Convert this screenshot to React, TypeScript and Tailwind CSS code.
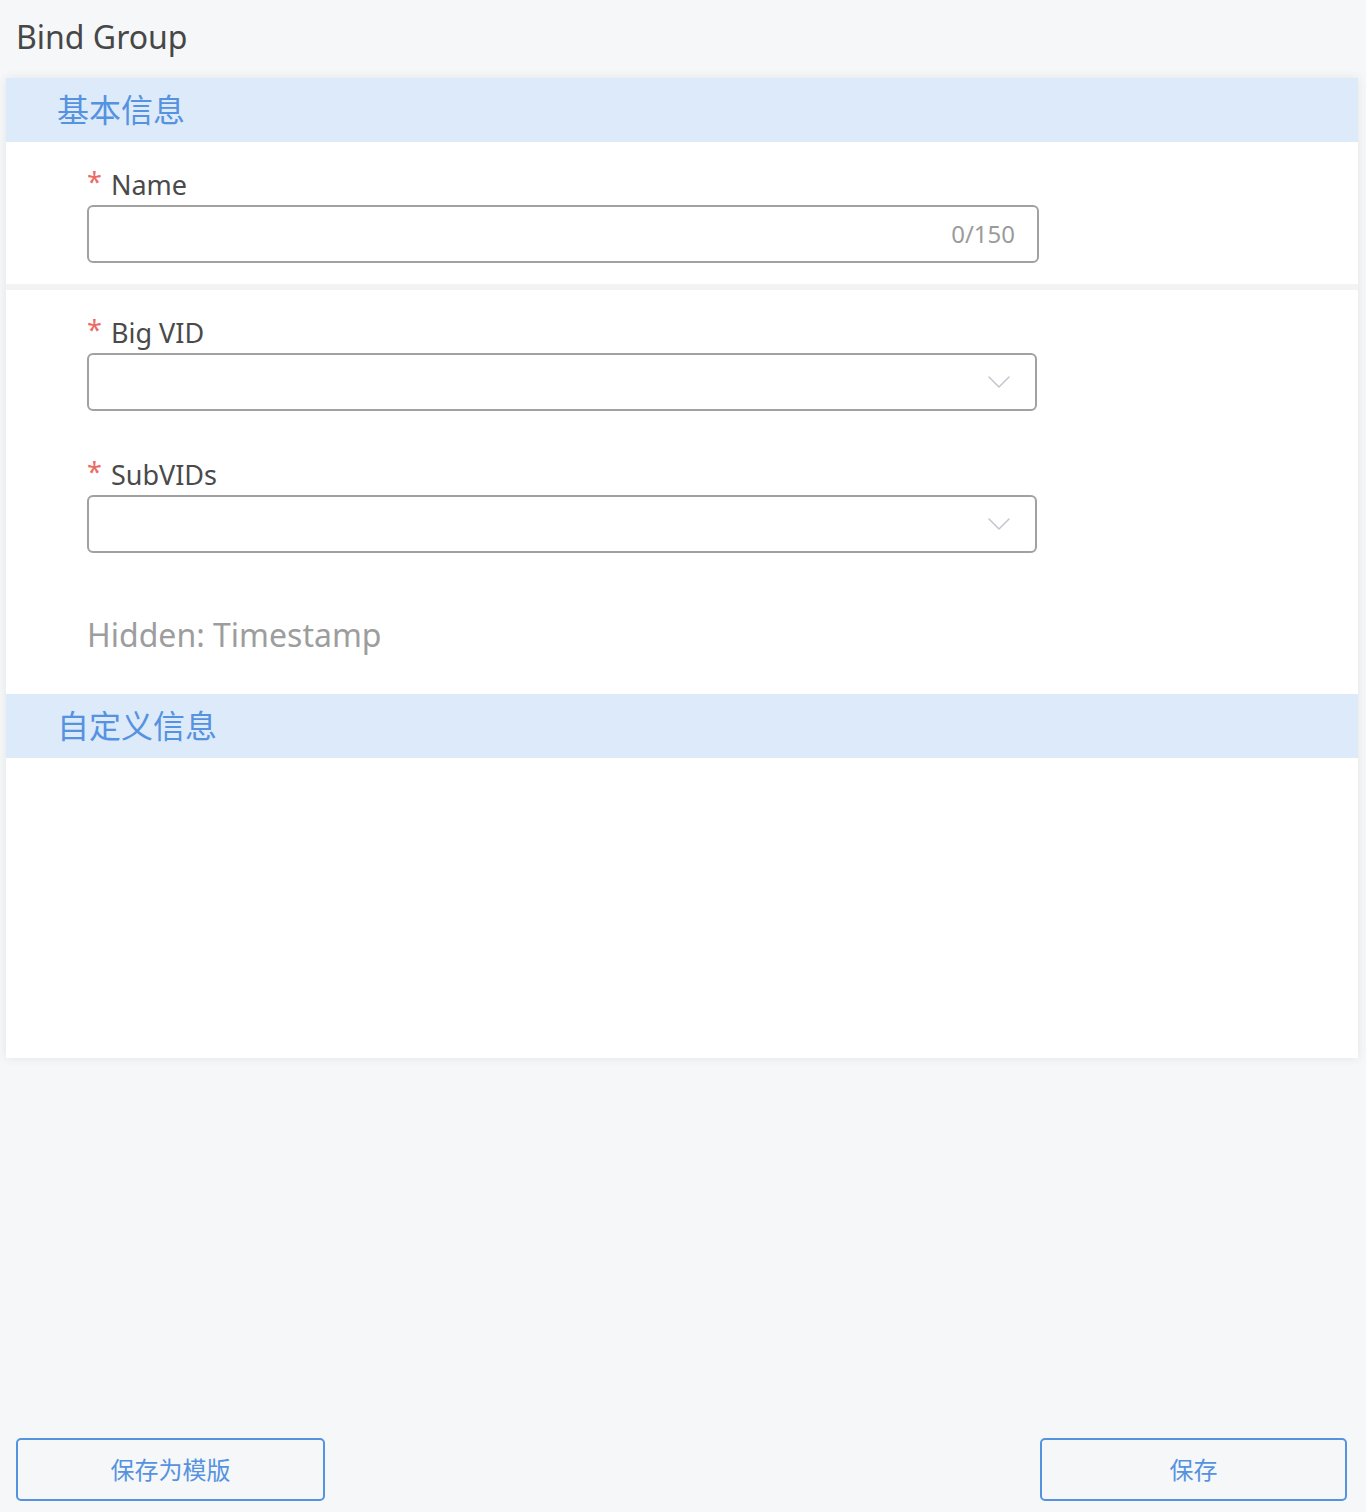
import React from "react";

const font = { fontFamily: '"Noto Sans", "Noto Sans CJK SC", sans-serif' };

function Chevron() {
  return (
    <svg width="22" height="12" viewBox="0 0 22 12" fill="none" className="shrink-0">
      <path d="M1 1 L11 11 L21 1" stroke="#c3c6cc" strokeWidth="1.5" strokeLinecap="round" strokeLinejoin="round" />
    </svg>
  );
}

function Label({ text }: { text: string }) {
  return (
    <div className="flex h-[36px] items-center text-[27px] leading-none text-[#4a4a4a]">
      <span className="mr-[9px] mt-[-6px] text-[27px] text-[#ea6b66]">*</span>
      <span>{text}</span>
    </div>
  );
}

function SelectBox() {
  return (
    <div className="mt-[3px] flex h-[58px] w-[950px] items-center justify-end rounded-[6px] border-2 border-[#a1a1a1] bg-white pr-[25px]">
      <Chevron />
    </div>
  );
}

function SectionHeader({ title }: { title: string }) {
  return (
    <div className="flex h-[64px] items-center bg-[#dceafa] pl-[51px] text-[32px] leading-none text-[#5592e0]">
      {title}
    </div>
  );
}

export default function App() {
  return (
    <div className="flex h-[1512px] flex-col bg-[#f6f7f9]" style={font}>
      <div className="pl-[16px] pt-[17px] text-[32px] leading-[40px] text-[#474747]">Bind Group</div>

      <div className="ml-[6px] mt-[21px] w-[1352px] bg-white shadow-[0_0_10px_rgba(0,0,0,0.08)]">
        <SectionHeader title="基本信息" />

        <div className="pb-[21px] pl-[81px] pt-[24px]">
          <Label text="Name" />
          <div className="mt-[3px] flex h-[58px] w-[952px] items-center justify-end rounded-[6px] border-2 border-[#a1a1a1] pr-[22px]">
            <span className="text-[24px] text-[#9b9b9b]">0/150</span>
          </div>
        </div>

        <div className="h-[6px] bg-[#f3f3f4]" />

        <div className="pb-[37px] pl-[81px] pt-[24px]">
          <Label text="Big VID" />
          <SelectBox />
          <div className="mt-[45px]">
            <Label text="SubVIDs" />
            <SelectBox />
          </div>
          <div className="mt-[60px] text-[32px] leading-[44px] text-[#9d9d9d]">Hidden: Timestamp</div>
        </div>

        <SectionHeader title="自定义信息" />
        <div className="h-[300px]" />
      </div>

      <div className="mt-auto flex justify-between pb-[11px] pl-[16px] pr-[19px]">
        <button className="flex h-[63px] w-[309px] items-center justify-center rounded-[5px] border-2 border-[#5592e0] text-[24px] text-[#5592e0]">
          保存为模版
        </button>
        <button className="flex h-[63px] w-[307px] items-center justify-center rounded-[5px] border-2 border-[#5592e0] text-[24px] text-[#5592e0]">
          保存
        </button>
      </div>
    </div>
  );
}
